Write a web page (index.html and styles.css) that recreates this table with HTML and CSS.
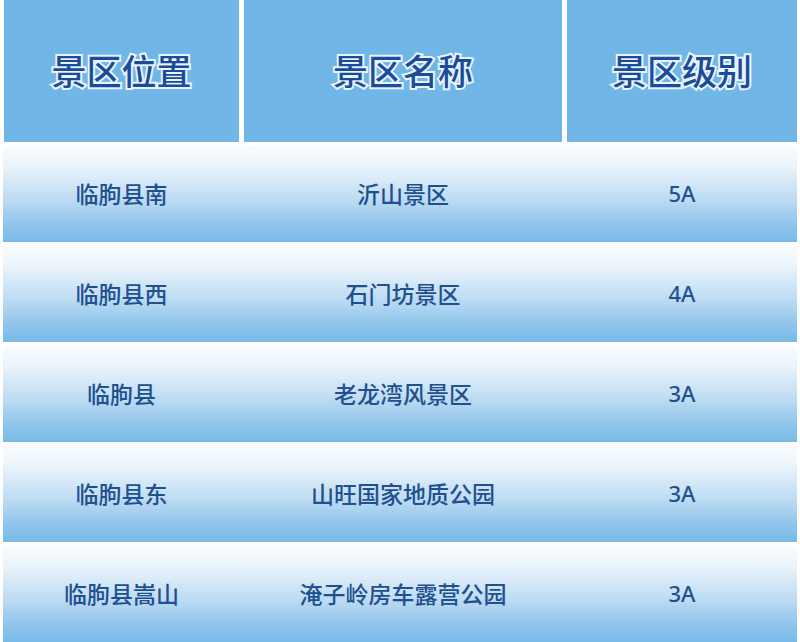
FILE: index.html
```html
<!DOCTYPE html>
<html lang="zh">
<head>
<meta charset="utf-8">
<title>景区</title>
<link rel="stylesheet" href="styles.css">
</head>
<body>
<div class="table">
  <div class="head">
    <div class="hcell">景区位置</div>
    <div class="hcell">景区名称</div>
    <div class="hcell">景区级别</div>
  </div>
  <div class="row"><div class="cell">临朐县南</div><div class="cell">沂山景区</div><div class="cell lat">5A</div></div>
  <div class="row"><div class="cell">临朐县西</div><div class="cell">石门坊景区</div><div class="cell lat">4A</div></div>
  <div class="row"><div class="cell">临朐县</div><div class="cell">老龙湾风景区</div><div class="cell lat">3A</div></div>
  <div class="row"><div class="cell">临朐县东</div><div class="cell">山旺国家地质公园</div><div class="cell lat">3A</div></div>
  <div class="row"><div class="cell">临朐县嵩山</div><div class="cell">淹子岭房车露营公园</div><div class="cell lat">3A</div></div>
</div>
</body>
</html>
```
FILE: styles.css
```css
html, body {
  margin: 0;
  padding: 0;
  background: #ffffff;
}
body {
  width: 800px;
  height: 642px;
  overflow: hidden;
  font-family: "Noto Sans CJK SC", "Noto Sans", sans-serif;
}
.table {
  display: grid;
  grid-template-rows: 142px repeat(5, 96px);
  row-gap: 4px;
  padding: 0 3px;
}
.head, .row {
  display: grid;
  grid-template-columns: 235px 318px 230px;
  column-gap: 5px;
  padding-left: 1px;
}
.hcell {
  background: #70b7e8;
  display: flex;
  align-items: center;
  justify-content: center;
  font-size: 35px;
  font-weight: 500;
  color: #1b4c99;
  padding-bottom: 4px;
  -webkit-text-stroke: 4px #e8f4fd;
  paint-order: stroke fill;
}
.row {
  background: linear-gradient(to bottom, #f9fcfe 0%, #e9f3fb 22%, #bedcf3 55%, #92c6ec 80%, #79b9e8 100%);
}
.cell {
  display: flex;
  align-items: center;
  justify-content: center;
  font-size: 23px;
  font-weight: 500;
  color: #21508f;
  padding-bottom: 2px;
}
.lat {
  font-family: "Noto Sans", sans-serif;
  font-size: 22px;
}
```
